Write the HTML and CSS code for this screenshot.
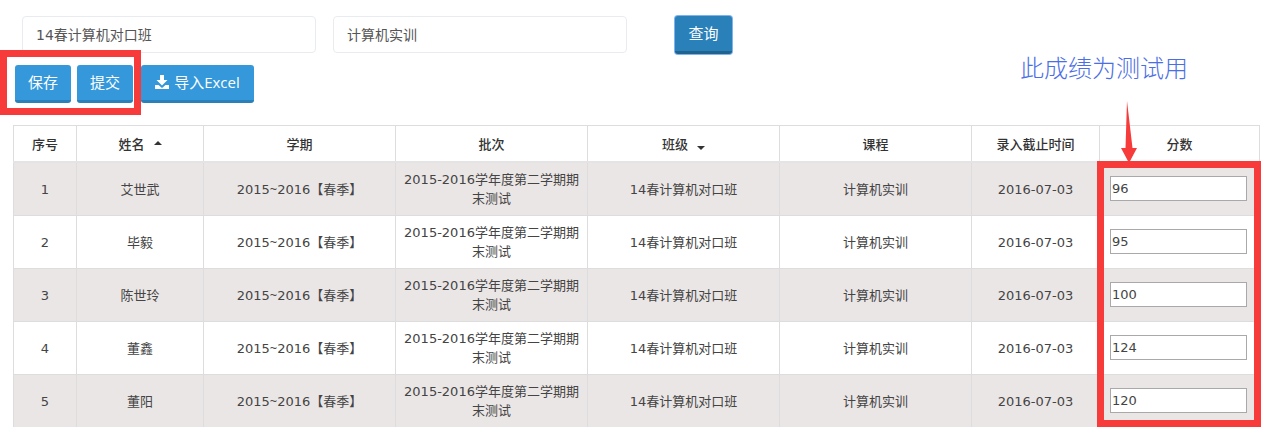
FILE: index.html
```html
<!DOCTYPE html>
<html lang="en">
<head>
    <meta charset="UTF-8">
    <title>成绩录入</title>
    <link rel="stylesheet" href="styles.css">
</head>
<body>
    <div class="container">
        <div class="search-row">
            <input class="search-input" type="text" value="14春计算机对口班">
            <input class="search-input search-course" type="text" value="计算机实训">
            <button class="btn btn-query">查询</button>
        </div>
        <div class="action-row">
            <button class="btn btn-small">保存</button>
            <button class="btn btn-small">提交</button>
            <button class="btn btn-excel">
                <svg class="icon-download" viewBox="0 0 14 14" width="14" height="14">
                    <path d="M5 0h4v5h3.500L7 10.500 1.500 5H5z" fill="#fff"/>
                    <path d="M0 10h3.500L7 13l3.500-3H14v4H0z" fill="#fff"/>
                </svg>
                导入Excel
            </button>
        </div>
        <table class="score-table">
            <colgroup>
                <col class="col-no"><col class="col-name"><col class="col-wide"><col class="col-wide">
                <col class="col-wide"><col class="col-wide"><col class="col-date"><col class="col-score">
            </colgroup>
            <thead>
                <tr>
                    <th>序号</th>
                    <th>姓名<span class="caret caret-up"></span></th>
                    <th>学期</th>
                    <th>批次</th>
                    <th>班级<span class="caret caret-down"></span></th>
                    <th>课程</th>
                    <th>录入截止时间</th>
                    <th>分数</th>
                </tr>
            </thead>
            <tbody>
                <tr>
                    <td>1</td><td>艾世武</td><td>2015<span class="tilde">~</span>2016【春季】</td><td>2015-2016学年度第二学期期末测试</td>
                    <td>14春计算机对口班</td><td>计算机实训</td><td>2016-07-03</td>
                    <td><input class="score-input" type="text" value="96"></td>
                </tr>
                <tr>
                    <td>2</td><td>毕毅</td><td>2015<span class="tilde">~</span>2016【春季】</td><td>2015-2016学年度第二学期期末测试</td>
                    <td>14春计算机对口班</td><td>计算机实训</td><td>2016-07-03</td>
                    <td><input class="score-input" type="text" value="95"></td>
                </tr>
                <tr>
                    <td>3</td><td>陈世玲</td><td>2015<span class="tilde">~</span>2016【春季】</td><td>2015-2016学年度第二学期期末测试</td>
                    <td>14春计算机对口班</td><td>计算机实训</td><td>2016-07-03</td>
                    <td><input class="score-input" type="text" value="100"></td>
                </tr>
                <tr>
                    <td>4</td><td>董鑫</td><td>2015<span class="tilde">~</span>2016【春季】</td><td>2015-2016学年度第二学期期末测试</td>
                    <td>14春计算机对口班</td><td>计算机实训</td><td>2016-07-03</td>
                    <td><input class="score-input" type="text" value="124"></td>
                </tr>
                <tr>
                    <td>5</td><td>董阳</td><td>2015<span class="tilde">~</span>2016【春季】</td><td>2015-2016学年度第二学期期末测试</td>
                    <td>14春计算机对口班</td><td>计算机实训</td><td>2016-07-03</td>
                    <td><input class="score-input" type="text" value="120"></td>
                </tr>
            </tbody>
        </table>

        <!-- annotations drawn over the page -->
        <div class="mark mark-buttons"></div>
        <div class="mark mark-scores"></div>
        <div class="note">此成绩为测试用</div>
        <svg class="note-arrow" viewBox="0 0 18 62" width="18" height="62">
            <path d="M7 0L12.500 47H17L9 62 1 47h4.500z" fill="#f73a3a"/>
        </svg>
    </div>
</body>
</html>
```

FILE: styles.css
```css
html, body {
    height: 100%;
}

body {
    margin: 0;
    overflow: hidden;
    background-color: #fff;
    font-family: "DejaVu Sans", "Noto Sans CJK SC", sans-serif;
    font-size: 13px;
    color: #444;
}

.container {
    position: relative;
    height: 427px;
    padding: 16px 2px 0 13px;
    box-sizing: border-box;
}

.search-row {
    display: flex;
    margin-left: 9px;
    height: 38px;
}

.search-input {
    width: 294px;
    height: 37px;
    box-sizing: border-box;
    padding: 0 13px 2px;
    border: 1px solid #e8ecf1;
    border-radius: 4px;
    background-color: #fff;
    font-family: inherit;
    font-size: 14px;
    color: #555;
}

.search-course {
    margin-left: 17px;
}

.btn {
    display: block;
    height: 38px;
    box-sizing: border-box;
    padding: 0 0 2px;
    border: 0;
    border-bottom: 3px solid #2a80b9;
    border-radius: 3px;
    background-color: #3498db;
    color: #fff;
    font-family: "Open Sans", "Noto Sans CJK SC", sans-serif;
    font-size: 15px;
}

.btn-query {
    width: 57px;
    margin-left: 48px;
    background-color: #2a80b9;
    border-bottom-color: #20638f;
    box-shadow: 0 0 0 1px #7fb2f0;
}

.action-row {
    display: flex;
    margin-top: 11px;
    margin-left: 2px;
}

.btn-small {
    width: 56px;
    margin-right: 6px;
}

.btn-excel {
    width: 113px;
    margin-left: 2px;
}

.icon-download {
    vertical-align: -1px;
    margin-right: 1px;
}

.score-table {
    width: 1246px;
    margin-top: 22px;
    border-collapse: collapse;
    table-layout: fixed;
}

.col-no { width: 63px; }
.col-name { width: 127px; }
.col-wide { width: 192px; }
.col-date { width: 128px; }
.col-score { width: 160px; }

.score-table th, .score-table td {
    border: 1px solid #ddd;
    text-align: center;
    vertical-align: middle;
    padding: 0 8px;
}

.score-table th {
    height: 35px;
    font-weight: 500;
    font-size: 13px;
    color: #333;
    border-bottom: 0;
}

.score-table td {
    height: 52px;
    line-height: 19px;
}

.score-table tbody tr:nth-child(odd) {
    background-color: #ebe6e6;
}

.score-table tbody tr:first-child td {
    border-top: 2px solid #e4e4e4;
}

.tilde {
    font-family: "Open Sans", sans-serif;
}

.caret {
    display: inline-block;
    margin-left: 9px;
    border-left: 4px solid transparent;
    border-right: 4px solid transparent;
}

.caret-up {
    border-bottom: 4px solid #333;
    vertical-align: 4px;
}

.caret-down {
    border-top: 4px solid #333;
    vertical-align: -1px;
}

.score-input {
    display: block;
    width: 137px;
    height: 25px;
    box-sizing: border-box;
    margin: 0 0 2px 2px;
    padding: 0 1px;
    border: 1px solid #a9a9a9;
    background-color: #fff;
    font-family: inherit;
    font-size: 13px;
    color: #444;
}

.mark {
    position: absolute;
    box-sizing: border-box;
    border: 7px solid #f73a3a;
}

.mark-buttons {
    left: 0;
    top: 50px;
    width: 141px;
    height: 65px;
}

.mark-scores {
    left: 1097px;
    top: 161px;
    width: 164px;
    height: 266px;
}

.note {
    position: absolute;
    left: 1020px;
    top: 52px;
    font-size: 24px;
    font-weight: 300;
    line-height: 34px;
    color: #4a6ee6;
}

.note-arrow {
    position: absolute;
    left: 1120px;
    top: 101px;
}
```
